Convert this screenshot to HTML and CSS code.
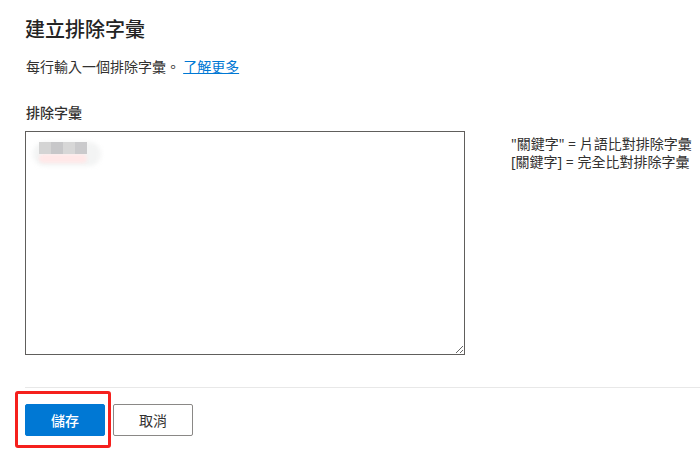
FILE: index.html
```html
<!DOCTYPE html>
<html lang="zh-Hant">
<head>
<meta charset="utf-8">
<title>建立排除字彙</title>
<link rel="stylesheet" href="styles.css">
</head>
<body>
<main class="page">
  <h1 class="title">建立排除字彙</h1>
  <p class="desc">每行輸入一個排除字彙。 <a class="link" href="#">了解更多</a></p>
  <div class="field-label">排除字彙</div>
  <div class="editor-row">
    <div class="editor">
      <textarea class="input" aria-label="排除字彙"></textarea>
      <div class="redacted" aria-hidden="true">
        <span class="halo"></span>
        <span class="pink"></span>
        <span class="cells"><i class="c1"></i><i class="c2"></i><i class="c3"></i><i class="c4"></i></span>
      </div>
    </div>
    <div class="hint">
      <div>"關鍵字" = 片語比對排除字彙</div>
      <div>[關鍵字] = 完全比對排除字彙</div>
    </div>
  </div>
  <footer class="actions">
    <div class="buttons">
      <button class="btn btn-primary" type="button">儲存</button>
      <button class="btn btn-default" type="button">取消</button>
    </div>
    <span class="highlight" aria-hidden="true"></span>
  </footer>
</main>
</body>
</html>
```

FILE: styles.css
```css
html, body {
  margin: 0;
  padding: 0;
  background: #ffffff;
  overflow: hidden;
}

body {
  font-family: "Noto Sans", "Noto Sans CJK TC", sans-serif;
  color: #323130;
  font-size: 14px;
}

.page {
  padding: 15px 0 20px 25px;
}

.title {
  margin: 0;
  font-size: 20px;
  line-height: 28px;
  font-weight: 500;
  font-family: "Noto Sans CJK TC", sans-serif;
  color: #242424;
}

.desc {
  margin: 13px 0 0 1px;
  font-size: 14px;
  line-height: 20px;
  font-family: "Noto Sans CJK TC", sans-serif;
}

.link {
  color: #0078d4;
  text-decoration: underline;
}

.field-label {
  margin: 26px 0 0 1px;
  font-size: 14px;
  line-height: 20px;
  font-weight: 500;
  font-family: "Noto Sans CJK TC", sans-serif;
}

.editor-row {
  display: flex;
  margin-top: 9px;
}

.editor {
  position: relative;
  flex: none;
  width: 440px;
  height: 224px;
}

.input {
  box-sizing: border-box;
  width: 440px;
  height: 224px;
  margin: 0;
  display: block;
  border: 1px solid #605e5c;
  border-radius: 0;
  resize: both;
  font-family: "Noto Sans CJK TC", sans-serif;
  font-size: 14px;
  padding: 6px 8px;
  outline: none;
}

.redacted {
  position: absolute;
  left: 8px;
  top: 9px;
  width: 70px;
  height: 28px;
  pointer-events: none;
}

.halo {
  position: absolute;
  left: 0;
  top: 2px;
  width: 68px;
  height: 24px;
  border-radius: 12px;
  background: #f3f4f4;
  filter: blur(2px);
}

.pink {
  position: absolute;
  left: 6px;
  top: 14px;
  width: 48px;
  height: 9px;
  border-radius: 5px;
  background: #ffe8e8;
  filter: blur(1.5px);
}

.cells {
  position: absolute;
  left: 6px;
  top: 2px;
  display: flex;
  filter: blur(0.6px);
}

.cells i {
  display: block;
  width: 12px;
  height: 12px;
}

.c1 { background: #d4d4d4; }
.c2 { background: #c7c7c9; }
.c3 { background: #d7d7d7; }
.c4 { background: #cacacc; }

.hint {
  margin: 4px 0 0 46px;
  font-size: 14px;
  line-height: 18px;
  color: #323130;
  font-family: "Noto Sans", "Noto Sans CJK TC", sans-serif;
  white-space: nowrap;
}

.actions {
  position: relative;
  margin-top: 32px;
  border-top: 1px solid #e8e8e8;
  padding-top: 16px;
}

.buttons {
  display: flex;
  gap: 8px;
}

.btn {
  box-sizing: border-box;
  width: 80px;
  height: 32px;
  border-radius: 2px;
  font-family: "Noto Sans CJK TC", sans-serif;
  font-size: 14px;
  cursor: pointer;
  padding: 0;
}

.btn-primary {
  background: #0078d4;
  border: 1px solid #0078d4;
  color: #ffffff;
  font-weight: 500;
}

.btn-default {
  background: #ffffff;
  border: 1px solid #8a8886;
  color: #323130;
}

.highlight {
  position: absolute;
  left: -10px;
  top: 3px;
  width: 90px;
  height: 51px;
  border: 3px solid #f5201d;
  border-radius: 3px;
  pointer-events: none;
}
```
